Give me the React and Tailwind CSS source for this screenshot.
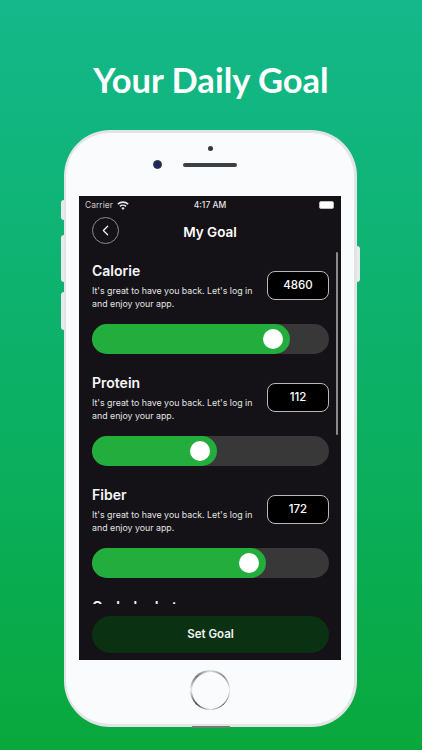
import { ChevronLeft } from "lucide-react";

const goals = [
  { name: "Calorie", value: "4860", fill: 198 },
  { name: "Protein", value: "112", fill: 125 },
  { name: "Fiber", value: "172", fill: 174 },
  { name: "Carbohydrate", value: "240", fill: 150 },
];

const WifiIcon = () => (
  <svg width="12" height="9" viewBox="0 0 12 9" fill="#e5e5e5">
    <path d="M6 9 4.3 7a2.4 2.4 0 0 1 3.4 0L6 9ZM3.3 5.9 2.4 4.8a5.3 5.3 0 0 1 7.2 0l-.9 1.1a4 4 0 0 0-5.4 0ZM1.4 3.7.3 2.5a8.3 8.3 0 0 1 11.4 0l-1.1 1.2a6.8 6.8 0 0 0-9.2 0Z" />
  </svg>
);

const GoalRow = ({ goal }) => (
  <div className="mb-[21px] shrink-0">
    <div className="flex justify-between items-start h-[61px]">
      <div>
        <h3 className="text-[14px] leading-[15px] font-semibold text-[#f7f7f7]">
          {goal.name}
        </h3>
        <p className="mt-[6px] text-[8.8px] leading-[13px] text-[#e2e2e2] w-[170px]">
          It's great to have you back. Let's log in and enjoy your app.
        </p>
      </div>
      <div className="w-[62px] h-[29px] mt-[8px] rounded-lg border border-[#b9b9b9] bg-black flex items-center justify-center text-[11.5px] font-medium text-white">
        {goal.value}
      </div>
    </div>
    <div className="h-[30px] rounded-full bg-[#383838]">
      <div
        className="relative h-full rounded-full bg-[#22ad3c]"
        style={{ width: goal.fill }}
      >
        <div className="absolute right-[7px] top-[5px] w-5 h-5 rounded-full bg-white" />
      </div>
    </div>
  </div>
);

export default function App() {
  return (
    <div className="relative w-[422px] h-[750px] overflow-hidden flex flex-col items-center bg-gradient-to-b from-[#14b88a] to-[#09a83c] [font-family:Inter,sans-serif]">
      <h1 className="mt-[56px] h-[48px] leading-[48px] text-[34.5px] font-bold text-white [font-family:Lato,sans-serif]">
        Your Daily Goal
      </h1>

      {/* Phone */}
      <div className="relative mt-[26px] mr-[1px] w-[293px] h-[597px] rounded-[46px] bg-[#fafbfd] border-y-[3px] border-r-[3px] border-l-[2px] border-[#e2e4e6] flex flex-col items-center">
        {/* side buttons */}
        <div className="absolute left-[-5px] top-[67px] w-[3px] h-[20px] rounded-l bg-[#e8eaec]" />
        <div className="absolute left-[-5px] top-[102px] w-[3px] h-[47px] rounded-l bg-[#e8eaec]" />
        <div className="absolute left-[-5px] top-[159px] w-[3px] h-[38px] rounded-l bg-[#e8eaec]" />
        <div className="absolute right-[-6px] top-[113px] w-[3px] h-[36px] rounded-r bg-[#e8eaec]" />
        <div className="absolute bottom-[-4px] left-[126px] w-[38px] h-[2px] bg-[#6d7f72]" />

        {/* Camera and speaker */}
        <div className="w-[5px] h-[5px] mt-[13px] rounded-full bg-[#33363c]" />
        <div className="relative mt-[12px] w-[54px] h-[4px] rounded-full bg-[#3c3f44] mb-[2px]">
          <div className="absolute left-[-30px] top-[-3px] w-[9px] h-[9px] rounded-full bg-[#1b2a5a] border border-[#33363c]" />
        </div>

        {/* Screen */}
        <div className="mt-[27px] w-[262px] h-[464px] relative bg-[#141217] overflow-hidden flex flex-col">
          <div className="relative h-[18px] flex items-center justify-between px-[6px] text-[8.5px] text-[#c9c9c9] shrink-0">
            <div className="flex items-center gap-[4px]">
              <span>Carrier</span>
              <WifiIcon />
            </div>
            <span className="absolute left-0 right-0 text-center text-[#e5e5e5] font-medium">4:17 AM</span>
            <div className="w-[15px] h-[8px] rounded-[2px] border border-[#bbb] bg-white mr-[1px]" />
          </div>

          <div className="relative h-[37px] flex items-center justify-center shrink-0">
            <div className="absolute left-[13px] top-[3px] w-[27px] h-[27px] rounded-full border border-[#8b8b8b] flex items-center justify-center">
              <ChevronLeft size={17} strokeWidth={1.75} color="#f2f2f2" />
            </div>
            <h2 className="text-[13.5px] font-semibold text-white">My Goal</h2>
          </div>

          <div className="flex-1 min-h-0 overflow-hidden pl-[13px] pr-[12px] pt-[12px] flex flex-col">
            {goals.map((goal) => (
              <GoalRow key={goal.name} goal={goal} />
            ))}
          </div>

          {/* Scrollbar */}
          <div className="absolute right-[3px] top-[56px] w-[2px] h-[183px] rounded-full bg-[#8a8a8e]" />

          {/* Footer */}
          <div className="h-[56px] shrink-0 pl-[13px] pr-[12px] pt-[12px]">
            <button className="w-full h-[37px] rounded-full bg-[#0a3212] text-[11.5px] font-semibold text-[#f2f2f2]">
              Set Goal
            </button>
          </div>
        </div>

        {/* Home button */}
        <div className="mt-[10px] w-[40px] h-[40px] rounded-full p-[1.5px] bg-[conic-gradient(#ddd,#888,#eee,#555,#ddd,#444,#eee,#777,#ddd)]">
          <div className="w-full h-full rounded-full bg-[#fafbfd]" />
        </div>
      </div>
    </div>
  );
}
